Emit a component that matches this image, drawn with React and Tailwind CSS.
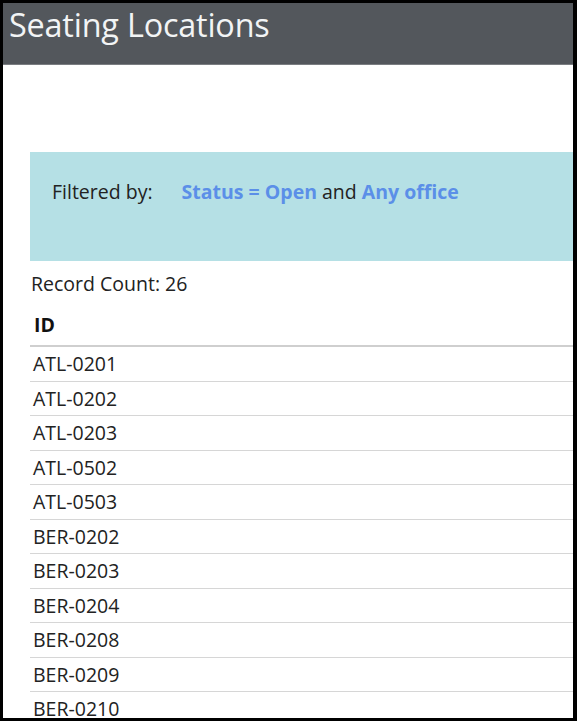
import React from "react";

const ids = [
  "ATL-0201",
  "ATL-0202",
  "ATL-0203",
  "ATL-0502",
  "ATL-0503",
  "BER-0202",
  "BER-0203",
  "BER-0204",
  "BER-0208",
  "BER-0209",
  "BER-0210",
];

export default function App() {
  return (
    <div
      className="w-[577px] h-[721px] bg-black pt-[3px] pl-[3px] pr-[4px] pb-[3px] overflow-hidden"
      style={{ fontFamily: '"Open Sans", "Noto Sans", sans-serif' }}
    >
      <div className="w-full h-full bg-white overflow-hidden flex flex-col">
        <div className="h-[62px] shrink-0 bg-[#53575c] border-b border-[#7a7d81] flex items-start pl-[6px] pt-[1px]">
          <h1 className="text-[32.4px] leading-[40px] text-[#f2f4f5] font-normal tracking-[-0.2px]">
            Seating Locations
          </h1>
        </div>
        <div className="pl-[27px] pt-[87px] flex flex-col">
          <div className="h-[109px] bg-[#b5e0e5] flex items-start pt-[27px] pl-[22px] text-[19.5px] leading-[26px] whitespace-nowrap">
            <span className="text-[#222]">Filtered by:</span>
            <span className="ml-[29px] font-bold text-[#5b8fe8]">Status = Open</span>
            <span className="ml-[5px] text-[#222]">and</span>
            <span className="ml-[5px] font-bold text-[#5b8fe8]">Any office</span>
          </div>
          <div className="pt-[10px] pl-[1px] text-[19.5px] leading-[26px] text-[#222]">
            Record Count: 26
          </div>
          <div className="mt-[8px] h-[42px] shrink-0 border-b-2 border-[#cfcfcf] pl-[4px] flex items-center text-[19.5px] font-bold text-[#111]">
            ID
          </div>
          {ids.map((id) => (
            <div
              key={id}
              className="h-[34.5px] shrink-0 border-b border-[#d6d6d6] pl-[3px] flex items-center text-[19.5px] text-[#222]"
            >
              {id}
            </div>
          ))}
        </div>
      </div>
    </div>
  );
}
